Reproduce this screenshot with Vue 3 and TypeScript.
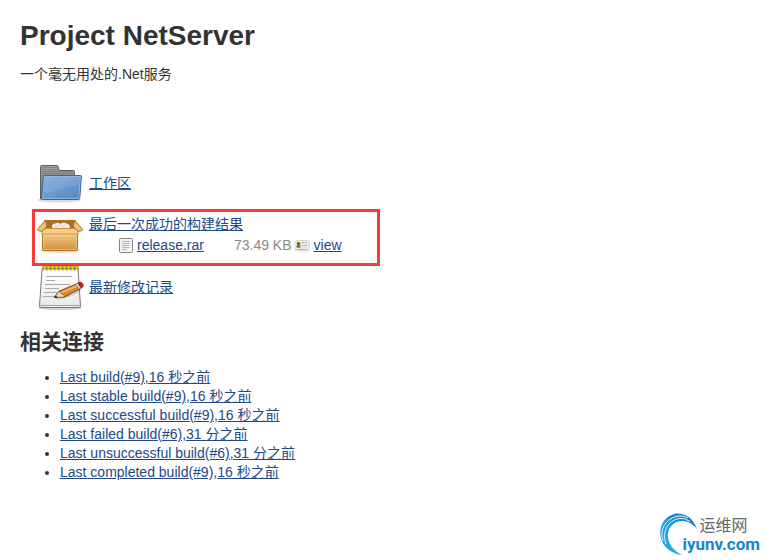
<script setup lang="ts">
interface BuildLink {
  id: string
  label: string
}

const builds: BuildLink[] = [
  { id: 'last', label: 'Last build(#9),16 秒之前' },
  { id: 'stable', label: 'Last stable build(#9),16 秒之前' },
  { id: 'successful', label: 'Last successful build(#9),16 秒之前' },
  { id: 'failed', label: 'Last failed build(#6),31 分之前' },
  { id: 'unsuccessful', label: 'Last unsuccessful build(#6),31 分之前' },
  { id: 'completed', label: 'Last completed build(#9),16 秒之前' },
]

const ringOffsets: number[] = [7, 11, 15, 19, 23, 27, 31, 35, 39]
</script>

<template>
  <div class="page">
    <main>
      <h1>Project NetServer</h1>
      <p class="description">一个毫无用处的.Net服务</p>

      <section class="actions">
        <div class="row">
          <svg class="icon" viewBox="0 0 48 48" aria-hidden="true">
            <defs>
              <linearGradient id="folderBack" x1="0" y1="0" x2="0" y2="1">
                <stop offset="0" stop-color="#a0a0a0" />
                <stop offset="1" stop-color="#686868" />
              </linearGradient>
              <linearGradient id="folderFront" x1="0" y1="0" x2="1" y2="1">
                <stop offset="0" stop-color="#7fabdc" />
                <stop offset="1" stop-color="#5687c4" />
              </linearGradient>
            </defs>
            <ellipse cx="23" cy="41" rx="22" ry="2.5" fill="#000" opacity=".14" />
            <path d="M4.5 40V7.500q0-1 1-1h15.500q1 0 1.200 1l1 4h14.300q1 0 1 1V40z" fill="url(#folderBack)" stroke="#606060" />
            <path d="M6 8.500h15M6 10.500h16M6 12.500h31M6 14.500h31M6 16.500h31" stroke="#777" stroke-width=".7" />
            <path d="M8.500 16.500h36q1 0 .9 1l-1.600 21.500q-.1 1.500-1.500 1.500H6.500q-1 0-.9-1L7.600 17.500q.1-1 .9-1z" fill="url(#folderFront)" stroke="#3465a4" />
            <path d="M8.500 17.500h35.800l-1.500 22H6.700z" fill="none" stroke="#a8c9ee" opacity=".6" />
            <path d="M9 18h34.500l-.7 8C28 27 20 33 8 34z" fill="#fff" opacity=".1" />
          </svg>
          <a href="#workspace">工作区</a>
        </div>

        <div class="row highlighted">
          <svg class="icon" viewBox="0 0 48 48" aria-hidden="true">
            <defs>
              <linearGradient id="boxFront" x1="0" y1="0" x2="0" y2="1">
                <stop offset="0" stop-color="#dfa652" />
                <stop offset=".25" stop-color="#f0c685" />
                <stop offset="1" stop-color="#d0913a" />
              </linearGradient>
            </defs>
            <ellipse cx="24" cy="39.500" rx="20" ry="2.500" fill="#000" opacity=".15" />
            <path d="M9 9.500h30l2 9H7z" fill="#a5722b" stroke="#a46413" />
            <path d="M16 17q-1-4 3-4.500 3-1.500 5.500.5 3-2.500 5.500-.5 4 0 4 4.500z" fill="#f0f0ec" />
            <path d="M19 15q3 1.500 5.500-1.500M26 15.500q2 0 3-1.500" stroke="#c9c9c2" fill="none" />
            <path d="M6.500 18h35v20q0 1.500-1.500 1.500H8q-1.500 0-1.500-1.500z" fill="url(#boxFront)" stroke="#b27017" />
            <path d="M7.500 24.500h33v14h-33z" fill="none" stroke="#fae0b3" opacity=".45" />
            <path d="M7 17.500h34l1.500 5.500h-37z" fill="#f4cd8e" stroke="#c98a35" stroke-width=".8" />
            <path d="M9 9.500 1.500 18.500q-.4 1 1 1.200l3.500.8L11 15zM39 9.500l7.500 9q.4 1-1 1.200l-3.500.8L37 15z" fill="#efc17c" stroke="#b27017" />
            <path d="M9 9.500h30" stroke="#b27017" />
          </svg>
          <div class="artifacts">
            <a href="#artifacts">最后一次成功的构建结果</a>
            <div class="files">
              <svg class="file-icon" viewBox="0 0 16 16" aria-hidden="true">
                <rect x="1.500" y=".5" width="13" height="14" rx="1" fill="#f4f4f4" stroke="#858585" />
                <path d="M4 3.500h8M4 5.500h8M4 7.500h7M4 9.500h8M4 11.500h5" stroke="#b8b8b8" />
              </svg>
              <a href="#release">release.rar</a>
              <span class="size">73.49 KB</span>
              <svg class="view-icon" viewBox="0 0 16 16" aria-hidden="true">
                <rect x="1" y="2.500" width="14.500" height="10.500" rx="1.500" fill="#e9e9e6" stroke="#dadad6" />
                <path d="M2.500 4.500h4v5h-4z" fill="#b9bd91" />
                <circle cx="4.500" cy="5.500" r="1.500" fill="#7d4c17" />
                <path d="M2.500 9.500q0-2.500 2-2.500t2 2.500z" fill="#5d7520" />
                <path d="M8 4.500h2M11 4.500h2M8 7.500h5M3 11.500h10" stroke="#b3b5af" />
              </svg>
              <a href="#view">view</a>
            </div>
          </div>
        </div>

        <div class="row">
          <svg class="icon" viewBox="0 0 48 48" aria-hidden="true">
            <defs>
              <linearGradient id="paper" x1="0" y1="0" x2="0" y2="1">
                <stop offset="0" stop-color="#fff" />
                <stop offset="1" stop-color="#e8e8e6" />
              </linearGradient>
            </defs>
            <ellipse cx="24" cy="45" rx="22" ry="2" fill="#000" opacity=".18" />
            <path d="M7 5.500h34q1 0 1.100 1l2.400 36.500q0 1.500-1.500 1.500H5q-1.500 0-1.500-1.500L6 6.500q0-1 1-1z" fill="url(#paper)" stroke="#777" />
            <path d="M4 42.500h40" stroke="#aaa" />
            <path d="M10 13.500h26M10 17.500h9M9 21.500h25M9 25.500h14M8 29.500h13M7 33.500h12" stroke="#aaa" />
            <g v-for="x in ringOffsets" :key="x">
              <path :d="`M${x} 7.500V4q0-1.500 1.500-1.500T${x + 3} 4v3`" fill="none" stroke="#756600" />
              <path :d="`M${x + 1.500} 7V3`" stroke="#edd400" stroke-width="1.700" />
            </g>
            <path d="M20 35.500q12 0 25-9" fill="none" stroke="#000" stroke-width="2" opacity=".15" />
            <path d="m18.500 34.500 4-6 19-8 4 4.500-17 9z" fill="#d98a32" stroke="#7c4708" />
            <path d="m18.500 34.500 4-6q2.500 0 3 2.500 3 0 3 3z" fill="#eed7a9" stroke="#8c5c20" stroke-width=".7" />
            <path d="m18 35 1.700-2.700 2 2.200z" fill="#252525" />
            <path d="m25.500 29.500 16.500-7" stroke="#f8bd68" stroke-width="1.700" />
            <path d="m39.500 21.200 3-1.200 3.700 4.500-3 1.500z" fill="#d3d7cf" stroke="#777" stroke-width=".7" />
            <path d="m42 20 1.700-.8q1.800-.2 3 1.500t-.2 3.200l-1.500.8z" fill="#dc2020" stroke="#9c0d0d" />
          </svg>
          <a href="#changes">最新修改记录</a>
        </div>
      </section>

      <h2>相关连接</h2>
      <ul>
        <li v-for="build in builds" :key="build.id">
          <a :href="`#${build.id}`">{{ build.label }}</a>
        </li>
      </ul>
    </main>

    <footer class="brand">
      <svg class="swirl" viewBox="0 0 40 44" aria-hidden="true">
        <defs>
          <linearGradient id="swirlColor" x1="0" y1="1" x2="1" y2="0">
            <stop offset="0" stop-color="#35b8ec" />
            <stop offset=".5" stop-color="#1798dc" />
            <stop offset="1" stop-color="#1675bd" />
          </linearGradient>
        </defs>
        <path d="M38 17C34 5 24 0 15 2 4 5-1 17 2 27c3 9 11 15 21 16C13 38 8 30 9 21 11 8 28 4 38 17z" fill="url(#swirlColor)" />
        <path d="M4 29C0 17 7 6 20 4q5-.5 9 2M7 32C3 20 8 9 20 6.500q6-1 11 3" fill="none" stroke="#fff" stroke-width=".9" />
      </svg>
      <div class="brand-text">
        <span class="brand-name">运维网</span>
        <span class="brand-domain">iyunv.com</span>
      </div>
    </footer>
  </div>
</template>

<style>
body {
  margin: 0;
  background: #fff;
}
</style>

<style scoped>
.page {
  display: flex;
  flex-direction: column;
  box-sizing: border-box;
  min-height: 100vh;
  padding: 20px 5px 4px 20px;
  color: #333;
  font: 14px/19px "Liberation Sans", "Noto Sans CJK SC", sans-serif;
}

h1,
h2,
p,
ul {
  margin: 0;
}

h1 {
  font-size: 28px;
  line-height: 32px;
}

.description {
  margin-top: 13px;
}

a {
  color: #204a87;
  text-decoration: underline;
}

.actions {
  display: flex;
  flex-direction: column;
  gap: 4px;
  width: fit-content;
  margin-top: 75px;
  padding-left: 16px;
}

.row {
  position: relative;
  display: flex;
  align-items: center;
  gap: 5px;
}

.highlighted::before {
  position: absolute;
  inset: -2px -38px -7px -4px;
  border: 3px solid #f93a3a;
  content: "";
  pointer-events: none;
}

.icon {
  flex: none;
  width: 48px;
  height: 48px;
}

.artifacts {
  display: flex;
  flex-direction: column;
  gap: 2px;
}

.files {
  display: flex;
  align-items: center;
  padding-left: 29px;
}

.file-icon,
.view-icon {
  width: 16px;
  height: 16px;
  margin-right: 3px;
}

.view-icon {
  margin-right: 4px;
  margin-left: 2px;
}

.size {
  margin-left: 30px;
  color: #888;
}

h2 {
  margin-top: 18px;
  font-size: 21px;
  line-height: 26px;
}

ul {
  margin-top: 13px;
  padding-left: 40px;
}

.brand {
  display: flex;
  justify-content: flex-end;
  margin-top: auto;
}

.swirl {
  width: 40px;
  height: 44px;
}

.brand-text {
  display: flex;
  flex-direction: column;
  margin-left: -17px;
  padding-top: 5px;
}

.brand-name {
  padding-left: 17px;
  color: #666;
  font-size: 16px;
  line-height: 18px;
}

.brand-domain {
  color: #1785d2;
  font-family: Roboto, "Liberation Sans", sans-serif;
  font-size: 17px;
  font-weight: bold;
  line-height: 18px;
}
</style>
